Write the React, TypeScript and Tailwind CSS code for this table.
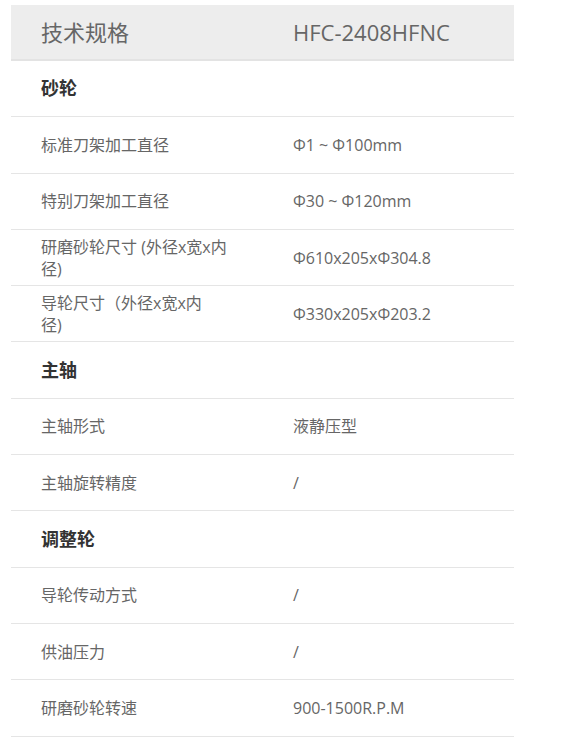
type Row = {
  label: string;
  value?: string;
  group?: boolean;
};

const rows: Row[] = [
  { label: "砂轮", group: true },
  { label: "标准刀架加工直径", value: "Φ1 ~ Φ100mm" },
  { label: "特别刀架加工直径", value: "Φ30 ~ Φ120mm" },
  { label: "研磨砂轮尺寸 (外径x宽x内\n径)", value: "Φ610x205xΦ304.8" },
  { label: "导轮尺寸（外径x宽x内\n径)", value: "Φ330x205xΦ203.2" },
  { label: "主轴", group: true },
  { label: "主轴形式", value: "液静压型" },
  { label: "主轴旋转精度", value: "/" },
  { label: "调整轮", group: true },
  { label: "导轮传动方式", value: "/" },
  { label: "供油压力", value: "/" },
  { label: "研磨砂轮转速", value: "900-1500R.P.M" },
];

export default function App() {
  return (
    <div
      className="min-h-screen bg-white pt-[5px] pl-[11px]"
      style={{ fontFamily: '"Open Sans", "Noto Sans CJK SC", sans-serif' }}
    >
      <div className="w-[503px]">
        {/* HEADER */}
        <div className="flex items-center h-[56px] bg-[#ededed] border-b-2 border-[#e3e3e3] text-[22px] text-[#666]">
          <div className="w-[252px] pl-[30px]">技术规格</div>
          <div className="flex-1 pl-[30px]">HFC-2408HFNC</div>
        </div>

        {/* ROWS */}
        {rows.map((row, i) => (
          <div
            key={i}
            className="flex items-center h-[56.3px] border-b border-[#e5e5e5]"
          >
            {row.group ? (
              <div className="pl-[30px] text-[18px] font-bold text-[#333]">
                {row.label}
              </div>
            ) : (
              <>
                <div className="w-[252px] px-[30px] text-[16px] leading-[22px] text-[#666] whitespace-pre-line">
                  {row.label}
                </div>
                <div className="flex-1 pl-[30px] text-[16px] text-[#666]">
                  {row.value}
                </div>
              </>
            )}
          </div>
        ))}
      </div>
    </div>
  );
}
